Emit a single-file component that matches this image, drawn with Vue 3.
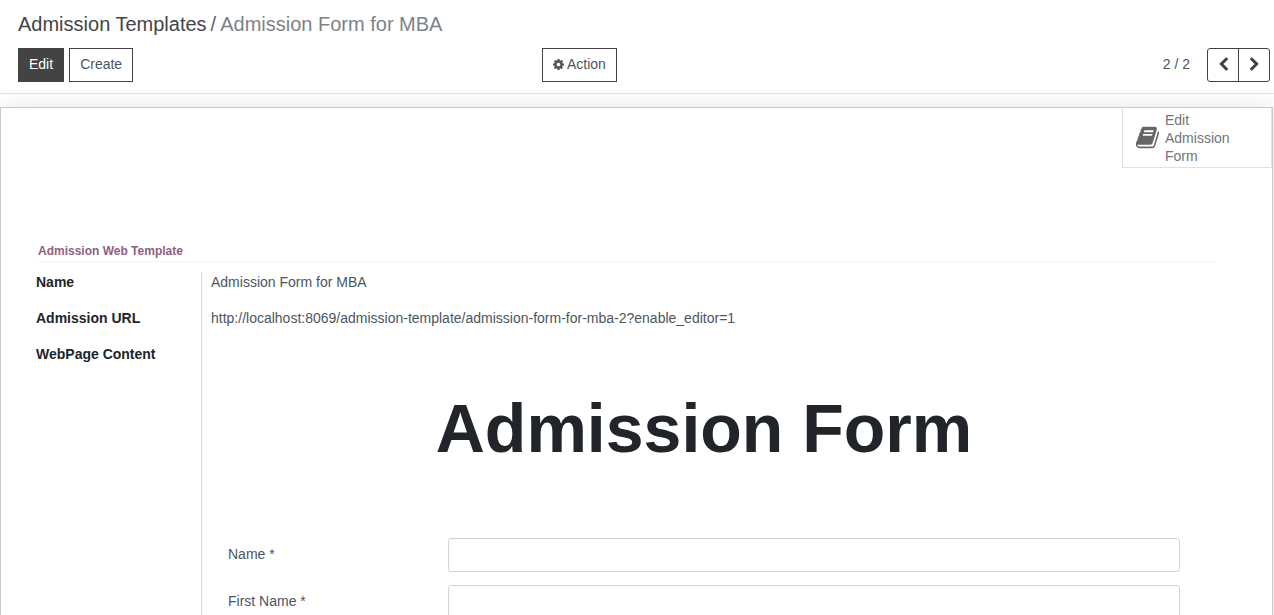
<script setup>
import { ref } from 'vue'

const fields = ref([
  { id: 'name', label: 'Name *', value: '' },
  { id: 'first-name', label: 'First Name *', value: '' },
])
</script>

<template>
  <div class="page">
    <header class="panel">
      <nav class="crumbs" aria-label="Breadcrumb">
        <a href="#" class="crumb-link">Admission Templates</a>
        <span class="crumb-sep">/</span>
        <span class="crumb-current">Admission Form for MBA</span>
      </nav>
      <div class="toolbar">
        <div class="group">
          <button type="button" class="btn primary">Edit</button>
          <button type="button" class="btn">Create</button>
        </div>
        <div class="group">
          <button type="button" class="btn">
            <svg class="cog" viewBox="128 128 1536 1536" aria-hidden="true"><path d="M1152 896q0-106-75-181t-181-75-181 75-75 181 75 181 181 75 181-75 75-181zm512-109v222q0 12-8 23t-20 13l-185 28q-19 54-39 91 35 50 107 138 10 12 10 25t-9 23q-27 37-99 108t-94 71q-12 0-26-9l-138-108q-44 23-91 38-16 136-29 186-7 28-36 28h-222q-14 0-24.5-8.5t-11.5-21.5l-28-184q-49-16-90-37l-141 107q-10 9-25 9-14 0-25-11-126-114-165-168-7-10-7-23 0-12 8-23 15-21 51-66.5t54-70.5q-27-50-41-99l-183-27q-13-2-21-12.5t-8-23.5v-222q0-12 8-23t19-13l186-28q14-46 39-92-40-57-107-138-10-12-10-24 0-10 9-23 26-36 98.5-107.5t94.5-71.5q13 0 26 10l138 107q44-23 91-38 16-136 29-186 7-28 36-28h222q14 0 24.5 8.5t11.5 21.5l28 184q49 16 90 37l142-107q9-9 24-9 13 0 25 10 129 119 165 170 7 8 7 22 0 12-8 23-15 21-51 66.5t-54 70.5q26 50 41 98l183 28q13 2 21 12.5t8 23.5z" /></svg>
            Action
          </button>
        </div>
        <div class="group pager">
          <span class="count">2 / 2</span>
          <div class="arrows">
            <button type="button" class="arrow" aria-label="Previous">
              <svg viewBox="0 0 1792 1792" aria-hidden="true"><path d="M1427 301l-531 531 531 531q19 19 19 45t-19 45l-166 166q-19 19-45 19t-45-19l-742-742q-19-19-19-45t19-45l742-742q19-19 45-19t45 19l166 166q19 19 19 45t-19 45z" /></svg>
            </button>
            <button type="button" class="arrow" aria-label="Next">
              <svg viewBox="0 0 1792 1792" aria-hidden="true"><path d="M1363 877l-742 742q-19 19-45 19t-45-19l-166-166q-19-19-19-45t19-45l531-531-531-531q-19-19-19-45t19-45l166-166q19-19 45-19t45 19l742 742q19 19 19 45t-19 45z" /></svg>
            </button>
          </div>
        </div>
      </div>
    </header>

    <main class="content">
      <section class="sheet">
        <div class="button-box">
          <button type="button" class="stat">
            <svg class="book" viewBox="0 0 1792 1792" aria-hidden="true"><path d="M1703 478q40 57 18 129l-275 906q-19 64-76.5 107.5t-122.5 43.5h-923q-77 0-148.5-53.5t-99.5-131.5q-24-67-2-127 0-4 3-27t4-37q1-8-3-21.5t-3-19.5q2-11 8-21t16.5-23.5 16.5-23.5q23-38 45-91.5t30-91.5q3-10 .5-30t-.5-28q3-11 17-28t17-23q21-36 42-92t25-90q1-9-2.5-32t.5-28q4-13 22-30.5t22-22.5q19-26 42.5-84.5t27.5-96.5q1-8-3-25.5t-2-26.5q2-8 9-18t18-23 17-21q8-12 16.5-30.5t15-35 16-36 19.5-32 26.5-23.5 36-11.5 47.5 5.5l-1 3q38-9 51-9h761q74 0 114 56t18 130l-274 906q-36 119-71.5 153.5t-128.5 34.5h-869q-27 0-38 15-11 16-1 43 24 70 144 70h923q29 0 56-15.5t35-41.5l300-987q7-22 5-57 38 15 59 43zm-1064 2q-4 13 2 22.5t20 9.5h608q13 0 25.5-9.5t16.5-22.5l21-64q4-13-2-22.5t-20-9.5h-608q-13 0-25.5 9.5t-16.5 22.5zm-83 256q-4 13 2 22.5t20 9.5h608q13 0 25.5-9.5t16.5-22.5l21-64q4-13-2-22.5t-20-9.5h-608q-13 0-25.5 9.5t-16.5 22.5z" /></svg>
            <span class="stat-text">Edit Admission Form</span>
          </button>
        </div>

        <h2 class="section-title">Admission Web Template</h2>

        <div class="record">
          <div class="labels">
            <div class="row">Name</div>
            <div class="row">Admission URL</div>
            <div class="row">WebPage Content</div>
          </div>
          <div class="values">
            <div class="row">Admission Form for MBA</div>
            <div class="row">http://localhost:8069/admission-template/admission-form-for-mba-2?enable_editor=1</div>
            <form class="web-form" @submit.prevent>
              <h1>Admission Form</h1>
              <div v-for="f in fields" :key="f.id" class="field">
                <label :for="f.id">{{ f.label }}</label>
                <input :id="f.id" v-model="f.value" type="text" />
              </div>
            </form>
          </div>
        </div>
      </section>
    </main>
  </div>
</template>

<style>
html,
body {
  margin: 0;
  background: #fdfdfd;
}
</style>

<style scoped>
.page {
  height: 100vh;
  overflow: hidden;
  display: flex;
  flex-direction: column;
  font-family: "Liberation Sans", Arial, sans-serif;
  font-size: 14px;
  line-height: 20px;
  color: #4c5560;
}

.page *,
.page {
  box-sizing: border-box;
}

button,
input {
  font: inherit;
  color: inherit;
  margin: 0;
}

svg {
  fill: currentColor;
  display: block;
  flex: none;
}

.panel {
  flex: none;
  padding: 12px 4px 11px 18px;
  background: #fff;
  border-bottom: 1px solid #e2e3e7;
}

.crumbs {
  display: flex;
  gap: 4px;
  font-size: 20px;
  line-height: 24px;
  color: #7c8288;
}

.crumb-link {
  color: #444547;
  text-decoration: none;
}

.crumb-sep {
  color: #5c6167;
}

.toolbar {
  margin-top: 12px;
  display: grid;
  grid-template-columns: 524fr 424fr 304fr;
}

.group {
  display: flex;
  align-items: center;
  gap: 5px;
}

.btn {
  height: 34px;
  padding: 0 10px 2px;
  display: flex;
  align-items: center;
  gap: 3px;
  border: 1px solid #434343;
  border-radius: 0;
  background: #fff;
}

.btn.primary {
  background: #434343;
  color: #fff;
}

.cog {
  width: 11px;
  height: 11px;
}

.pager {
  justify-content: flex-end;
  gap: 17px;
}

.count {
  padding-bottom: 2px;
}

.arrows {
  display: flex;
  border: 1px solid #434343;
  border-radius: 3px;
}

.arrow {
  width: 30px;
  height: 32px;
  padding: 0 0 2px;
  display: flex;
  align-items: center;
  justify-content: center;
  border: 0;
  background: none;
  color: #434343;
}

.arrow + .arrow {
  width: 31px;
  border-left: 1px solid #434343;
}

.arrow svg {
  width: 15px;
  height: 15px;
}

.content {
  flex: 1 0 auto;
  padding: 13px 1px 0 0;
}

.sheet {
  min-height: 100%;
  border: 1px solid #c8c8d3;
  background: #fff;
  box-shadow: 0 0 20px -4px rgba(0, 0, 0, 0.13);
}

.button-box {
  display: flex;
  justify-content: flex-end;
}

.stat {
  width: 150px;
  height: 60px;
  padding: 0 32px 0 12px;
  display: flex;
  align-items: center;
  gap: 5px;
  border: 1px solid #dee2e6;
  border-top: 0;
  background: #fff;
  color: #6f757b;
  text-align: left;
}

.book {
  width: 25px;
  height: 25px;
  color: #666;
}

.stat-text {
  line-height: 18px;
}

.section-title {
  margin: 73px 54px 10px 36px;
  padding-left: 1px;
  border-bottom: 1px solid #f4f4f5;
  font-size: 12px;
  line-height: 20px;
  color: #8f5f80;
}

.record {
  display: flex;
  padding: 0 54px 24px 35px;
}

.labels {
  width: 165px;
  flex: none;
  font-weight: bold;
  color: #212529;
}

.values {
  flex: 1;
  padding-left: 9px;
  border-left: 1px solid #d8dadd;
}

.row {
  height: 36px;
}

.web-form {
  padding: 0 38px 0 17px;
}

h1 {
  margin: 43px 0 69px;
  font-size: 68px;
  line-height: 82px;
  text-align: center;
  color: #212529;
}

.field {
  display: flex;
  align-items: center;
  margin-bottom: 13px;
}

.field label {
  width: 220px;
  flex: none;
  padding-bottom: 2px;
}

.field input {
  flex: 1;
  height: 34px;
  padding: 0 12px;
  border: 1px solid #ced4da;
  border-radius: 3px;
  background: #fff;
}
</style>
